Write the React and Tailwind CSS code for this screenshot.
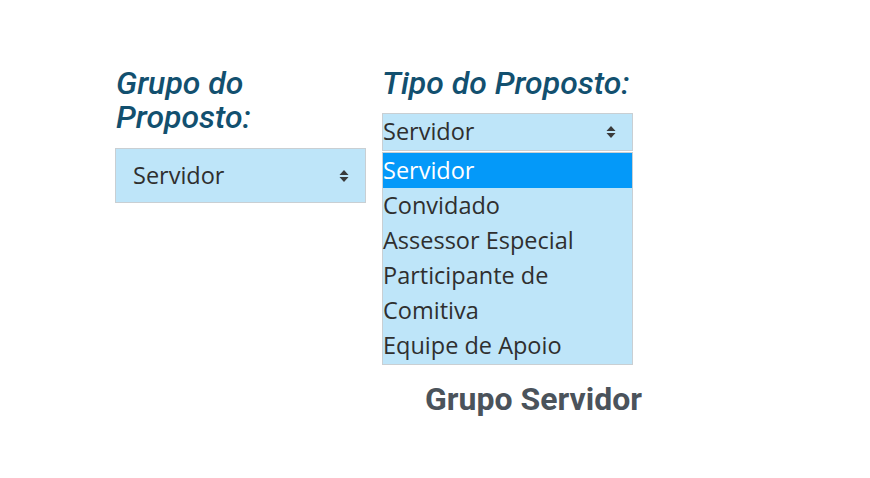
import React from 'react';

const options = ['Servidor', 'Convidado', 'Assessor Especial', 'Participante de', 'Comitiva', 'Equipe de Apoio'];

function Arrows() {
    return (
        <svg width="10" height="14" viewBox="0 0 10 14" className="shrink-0">
            <path d="M5 1 L9.5 6 L0.5 6 Z" fill="#3a3a3a" />
            <path d="M5 13 L9.5 8 L0.5 8 Z" fill="#3a3a3a" />
        </svg>
    );
}

function App() {
    return (
        <div className="w-[870px] h-[478px] bg-white font-['Open_Sans',sans-serif]">
            <div className="flex pt-[66px] pl-[115px] gap-4">
                {/* Grupo */}
                <div className="w-[251px]">
                    <h2 className="font-['Roboto',sans-serif] italic font-medium text-[32px] leading-[34px] text-[#12506f] pl-px mb-[14px]">
                        Grupo do Proposto:
                    </h2>
                    <div className="h-[55px] bg-[#bee5f9] border border-[#c9cfd3] flex items-center justify-between pl-[17px] pr-[16px] text-[23.5px] text-[#2f2f2f]">
                        <span>Servidor</span>
                        <Arrows />
                    </div>
                </div>

                {/* Tipo */}
                <div className="w-[251px]">
                    <h2 className="font-['Roboto',sans-serif] italic font-medium text-[32px] leading-[34px] text-[#12506f] mb-[13px]">
                        Tipo do Proposto:
                    </h2>
                    <div className="h-[38px] bg-[#bee5f9] border border-[#c9cfd3] flex items-center justify-between pr-[16px] text-[23.5px] text-[#2f2f2f]">
                        <span>Servidor</span>
                        <Arrows />
                    </div>
                    <div className="mt-px bg-[#bee5f9] border border-[#c9cfd3] pb-px text-[23.5px] text-[#2f2f2f]">
                        {options.map((o, i) => (
                            <div
                                key={o}
                                className={`h-[35px] leading-[35px] ${i === 0 ? 'bg-[#0499f9] text-white' : ''}`}
                            >
                                {o}
                            </div>
                        ))}
                    </div>
                    <p className="font-['Roboto',sans-serif] font-bold text-[32px] leading-[34px] text-[#4b535b] mt-[17px] pl-[43px] whitespace-nowrap">
                        Grupo Servidor
                    </p>
                </div>
            </div>
        </div>
    );
}

export default App;
